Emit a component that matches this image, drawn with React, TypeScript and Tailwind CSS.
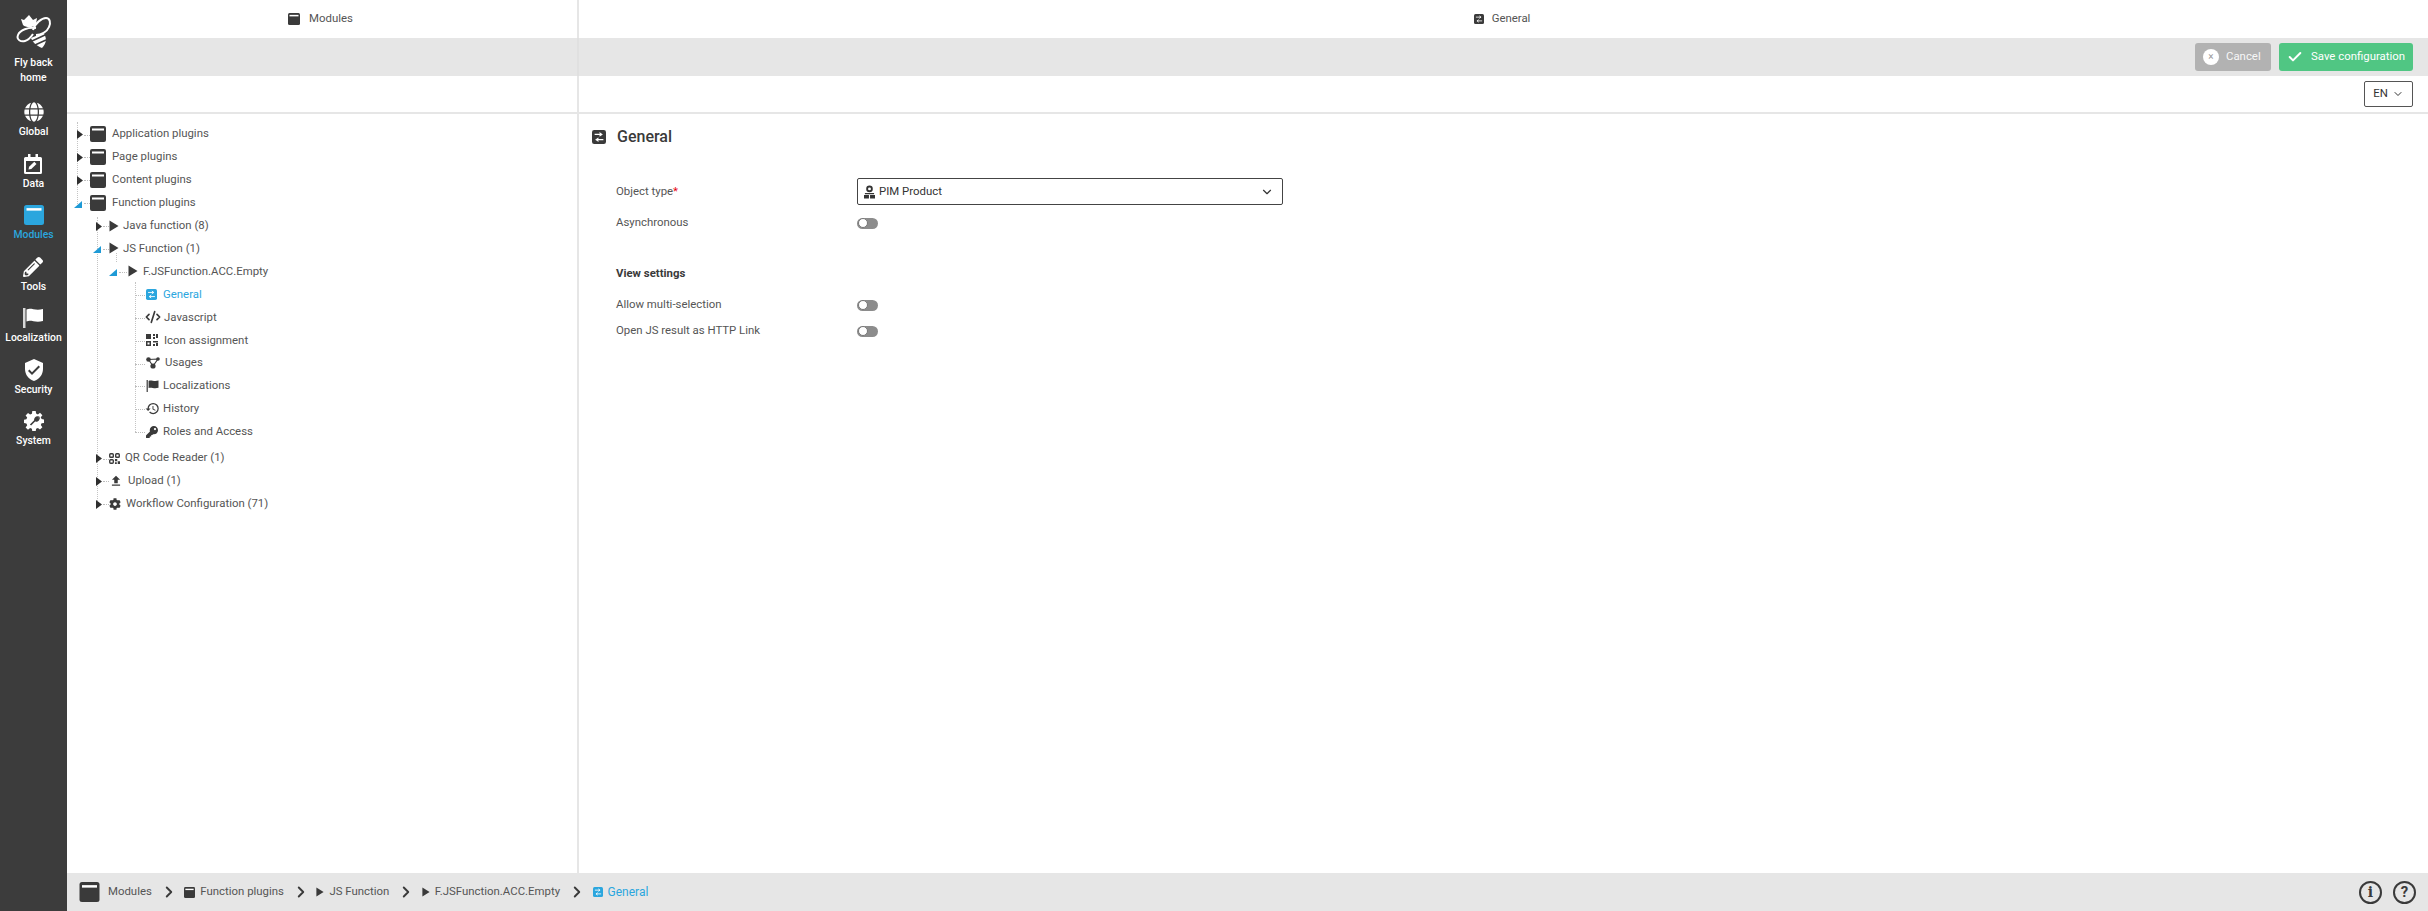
import { ReactNode } from "react";
import { FaGlobe, FaPencilAlt, FaCog, FaKey } from "react-icons/fa";
import { MdFileUpload, MdHistory, MdVerifiedUser } from "react-icons/md";
import { ChevronDown, ChevronRight, Check, CodeXml } from "lucide-react";

function ModuleIcon({ className }: { className: string }) {
  return (
    <svg viewBox="0 0 16 16" className={className}>
      <rect x="0" y="0" width="16" height="16" rx="2" fill="currentColor" />
      <rect x="2" y="2.500" width="12" height="2" fill="#fff" />
    </svg>
  );
}

function SlidersIcon({ className }: { className: string }) {
  return (
    <svg viewBox="0 0 16 16" className={className}>
      <rect x="0" y="0" width="16" height="16" rx="2.500" fill="currentColor" />
      <path d="M3 5h8M8.500 3l2.800 2-2.800 2M13 11H5M7.500 9l-2.800 2 2.800 2" stroke="#fff" strokeWidth="1.300" fill="none" />
    </svg>
  );
}

function PlayIcon({ className }: { className: string }) {
  return (
    <svg viewBox="0 0 10 12" className={className}>
      <path d="M0.500 0.500 L9.500 6 L0.500 11.500 Z" fill="currentColor" />
    </svg>
  );
}

function QrIcon({ className }: { className: string }) {
  return (
    <svg viewBox="0 0 12 12" className={className}>
      <g fill="none" stroke="currentColor" strokeWidth="1.500">
        <rect x="0.800" y="0.800" width="3.900" height="3.900" rx="1" />
        <rect x="7.300" y="0.800" width="3.900" height="3.900" rx="1" />
        <rect x="0.800" y="7.300" width="3.900" height="3.900" rx="1" />
      </g>
      <path fill="currentColor" d="M6.500 6.500h2.500V9H6.500zM9.500 9h2.500v3H9.500zM6.500 10h2v2h-2z" />
    </svg>
  );
}

function AssignIcon({ className }: { className: string }) {
  return (
    <svg viewBox="0 0 12 12" className={className}>
      <path fill="currentColor" fillRule="evenodd" d="M0 0h5v5H0zM7 0h2v2H7zM10 0h2v4h-2zM7 3h2v2H7zM0 7h5v5H0zM1.500 8.500v2h2v-2zM7 7h5v1.500H7zM10 9h2v3h-2zM7 10h2v2H7z" />
    </svg>
  );
}

function UsagesIcon({ className }: { className: string }) {
  return (
    <svg viewBox="0 0 14 12" className={className}>
      <path d="M2.500 2.500 7 9M12 2 7 9M2.500 2.500 12 2" stroke="currentColor" strokeWidth="1.200" fill="none" />
      <circle cx="2.500" cy="2.500" r="2.300" fill="currentColor" />
      <circle cx="12" cy="2" r="1.800" fill="currentColor" />
      <circle cx="7" cy="9" r="2.600" fill="currentColor" />
    </svg>
  );
}

function PersonIcon({ className }: { className: string }) {
  return (
    <svg viewBox="0 0 12 14" className={className}>
      <path fill="currentColor" fillRule="evenodd" d="M6 0a3.600 3.600 0 1 1 0 7.200A3.600 3.600 0 0 1 6 0zM6 2a1.600 1.600 0 1 0 0 3.200A1.600 1.600 0 0 0 6 2z" />
      <path fill="currentColor" d="M1 8h10v1.400H1zM0 10.200h5.400V14H0zM6.600 10.200H12V14H6.600z" />
    </svg>
  );
}

function FlagIcon({ className }: { className: string }) {
  return (
    <svg viewBox="0 0 20 20" className={className}>
      <rect x="0" y="0" width="2.500" height="20" fill="currentColor" opacity="0.800" />
      <path fill="currentColor" d="M3.500 1.500C8 -0.500 12 3 20 1V13C12 15 8 11.500 3.500 13.500Z" />
    </svg>
  );
}

function BeeLogo() {
  return (
    <svg viewBox="0 0 36 34" className="w-[36px] h-[34px] text-white">
      <g stroke="currentColor" fill="none" strokeWidth="2">
        <path d="M17 15C19 8 26 3 30 3C34 3 35 8 33 12C31 17 25 20 20 20" />
        <path d="M20 13C12 12 4 15 2 20C0 25 5 27 9 26C13 25 15 22 17 19" />
      </g>
      <path d="M5 4L8 5L13 0L17 5L21 3L20 9C18 13 10 13 7 10Z" fill="currentColor" />
      <path d="M15 23L27 18C31 22 31 28 26 33C21 31 17 28 15 23Z" fill="currentColor" />
      <path d="M16 26L29 20M19 30L30 25" stroke="#3c3c3c" strokeWidth="1.500" />
    </svg>
  );
}

function CalendarIcon() {
  return (
    <svg viewBox="0 0 18 20" className="w-[18px] h-[20px] text-white">
      <path fill="currentColor" fillRule="evenodd" d="M1.500 3H4V0h2.500v3h5V0H14v3h2.500A1.500 1.500 0 0 1 18 4.500v14a1.500 1.500 0 0 1-1.500 1.500h-15A1.500 1.500 0 0 1 0 18.500v-14A1.500 1.500 0 0 1 1.500 3zM2 7v11h14V7z" />
      <path fill="currentColor" d="M4.500 15.500l.6-2.800 5.200-5 2.200 2.200-5.200 5z" />
    </svg>
  );
}

function SystemIcon() {
  return (
    <svg viewBox="0 0 20 20" className="w-[20px] h-[20px] text-white">
      <path fill="currentColor" d="M8.300 0h3.400l.4 2.600 1.800.8 2.100-1.600 2.400 2.400-1.600 2.100.8 1.800 2.600.4v3.400l-2.600.4-.8 1.800 1.600 2.100-2.400 2.400-2.100-1.600-1.800.8-.4 2.600H8.300l-.4-2.600-1.800-.8L4 18.800l-2.400-2.400 1.600-2.100-.8-1.800L0 12.100V8.700l2.400-.4.8-1.800-1.600-2.100L4 2l2.100 1.600 1.800-.8z" />
      <path d="M6.500 14 11 9.500M11 9.500a2.600 2.600 0 0 1 3-3.300l-1.500 1.500.8 1.200 1.500-1a2.600 2.600 0 0 1-3.800 1.600z" stroke="#3c3c3c" strokeWidth="1.700" fill="#3c3c3c" />
    </svg>
  );
}

function NavItem({ icon, label, active, className }: { icon: ReactNode; label: string; active?: boolean; className: string }) {
  return (
    <div className={`flex flex-col items-center ${active ? "text-[#2ba6de]" : "text-white"} ${className}`}>
      <div className="h-[24px] flex items-center justify-center">{icon}</div>
      <div className="text-[10.400px] leading-[14px] font-medium mt-[1px]">{label}</div>
    </div>
  );
}

function Sidebar() {
  return (
    <aside className="w-[67px] shrink-0 bg-[#3c3c3c] flex flex-col items-center pt-[15px]">
      <BeeLogo />
      <div className="text-white text-[10.400px] leading-[14.500px] text-center mt-[7px] font-medium">
        Fly back
        <br />
        home
      </div>
      <NavItem className="mt-[15px] h-[51.500px]" label="Global" icon={<FaGlobe className="w-[20px] h-[20px]" />} />
      <NavItem className="h-[51.500px]" label="Data" icon={<CalendarIcon />} />
      <NavItem className="h-[51.500px]" label="Modules" active icon={<ModuleIcon className="w-[20px] h-[20px]" />} />
      <NavItem className="h-[51.500px]" label="Tools" icon={<FaPencilAlt className="w-[20px] h-[20px]" />} />
      <NavItem className="h-[51.500px]" label="Localization" icon={<FlagIcon className="w-[20px] h-[20px]" />} />
      <NavItem className="h-[51.500px]" label="Security" icon={<MdVerifiedUser className="w-[24px] h-[24px]" />} />
      <NavItem className="h-[51.500px]" label="System" icon={<SystemIcon />} />
    </aside>
  );
}

function Toggle({ open }: { open?: boolean }) {
  if (open) {
    return (
      <svg viewBox="0 0 8 7" className="w-[8px] h-[7px] ml-[-3px] mt-[3px] text-[#1e9ad6]">
        <path d="M8 0V7H0Z" fill="currentColor" />
      </svg>
    );
  }
  return (
    <svg viewBox="0 0 6 9" className="w-[6px] h-[9px] mt-[1px] text-[#2f2f2f]">
      <path d="M0 0L6 4.500L0 9Z" fill="currentColor" />
    </svg>
  );
}

function Row({ pad, toggle, open, icon, label, active, slot, gap, dots }: {
  pad: string; toggle?: boolean; open?: boolean; icon: ReactNode; label: string; active?: boolean; slot: string; gap: string; dots?: string;
}) {
  return (
    <div className={`relative h-[22.900px] flex items-center ${pad} ${active ? "text-[#2ba6de]" : "text-[#555]"}`}>
      {dots && <span className={`absolute top-[12px] border-t border-dotted border-[#bdbdbd] ${dots}`} />}
      <div className={`${slot} shrink-0 flex items-center`}>{toggle && <Toggle open={open} />}</div>
      <div className={`shrink-0 flex items-center ${gap} ${active ? "text-[#2ba6de]" : "text-[#3a3a3a]"}`}>{icon}</div>
      <span className="whitespace-nowrap">{label}</span>
    </div>
  );
}

function Tree() {
  const top = { pad: "pl-[10px]", toggle: true, slot: "w-[13px]", gap: "mr-[6px]", dots: "left-[17px] w-[6px]" };
  const mid = { pad: "pl-[29px]", toggle: true, slot: "w-[13px]", gap: "mr-[4px]", dots: "left-[36px] w-[6px]" };
  const leaf = { pad: "pl-[79px]", slot: "w-0", dots: "left-[68px] w-[10px]" };
  const playSm = <PlayIcon className="w-[10px] h-[12px]" />;
  return (
    <div className="relative pt-[8.600px] text-[11.400px]">
      <div className="absolute left-[10px] top-[8px] h-[84px] border-l border-dotted border-[#c4c4c4]" />
      <div className="absolute left-[30px] top-[103px] h-[286px] border-l border-dotted border-[#c4c4c4]" />
      <div className="absolute left-[49px] top-[139px] h-[9px] border-l border-dotted border-[#c4c4c4]" />
      <div className="absolute left-[68px] top-[168px] h-[150px] border-l border-dotted border-[#c4c4c4]" />
      <Row {...top} icon={<ModuleIcon className="w-[16px] h-[16px]" />} label="Application plugins" />
      <Row {...top} icon={<ModuleIcon className="w-[16px] h-[16px]" />} label="Page plugins" />
      <Row {...top} icon={<ModuleIcon className="w-[16px] h-[16px]" />} label="Content plugins" />
      <Row {...top} open icon={<ModuleIcon className="w-[16px] h-[16px]" />} label="Function plugins" />
      <Row {...mid} icon={playSm} label="Java function (8)" />
      <Row {...mid} open icon={playSm} label="JS Function (1)" />
      <Row pad="pl-[45px]" toggle open slot="w-[16px]" gap="mr-[5px]" dots="left-[52px] w-[8px]" icon={playSm} label="F.JSFunction.ACC.Empty" />
      <Row {...leaf} active gap="mr-[6px]" icon={<SlidersIcon className="w-[11px] h-[11px]" />} label="General" />
      <Row {...leaf} gap="mr-[3px]" icon={<CodeXml className="w-[16px] h-[16px] ml-[-1px]" strokeWidth={2.500} />} label="Javascript" />
      <Row {...leaf} gap="mr-[6px]" icon={<AssignIcon className="w-[12px] h-[12px]" />} label="Icon assignment" />
      <Row {...leaf} gap="mr-[5px]" icon={<UsagesIcon className="w-[14px] h-[12px]" />} label="Usages" />
      <Row {...leaf} gap="mr-[4px]" icon={<FlagIcon className="w-[13px] h-[12px]" />} label="Localizations" />
      <Row {...leaf} gap="mr-[3px]" icon={<MdHistory className="w-[15px] h-[15px] ml-[-1px]" />} label="History" />
      <Row {...leaf} gap="mr-[5px]" icon={<FaKey className="w-[12px] h-[12px]" />} label="Roles and Access" />
      <div className="h-[3.500px]" />
      <Row {...mid} gap="mr-[5px]" icon={<QrIcon className="w-[11px] h-[11px]" />} label="QR Code Reader (1)" />
      <Row {...mid} gap="mr-[5px]" icon={<MdFileUpload className="w-[14px] h-[14px]" />} label="Upload (1)" />
      <Row {...mid} gap="mr-[5px]" icon={<FaCog className="w-[12px] h-[12px]" />} label="Workflow Configuration (71)" />
    </div>
  );
}

function Switch() {
  return (
    <div className="w-[21px] h-[11px] rounded-full bg-[#8c8c8c] flex items-center">
      <div className="w-[10px] h-[10px] rounded-full bg-white border border-[#777] ml-[0.500px]" />
    </div>
  );
}

function Crumb({ icon, label, active }: { icon: ReactNode; label: string; active?: boolean }) {
  return (
    <div className="flex items-center">
      {icon}
      <span className={`ml-[5px] whitespace-nowrap ${active ? "text-[#2ba6de] text-[12px]" : ""}`}>{label}</span>
      {!active && <ChevronRight className="w-[18px] h-[18px] ml-[8px] mr-[6.500px] text-[#3a3a3a]" strokeWidth={2.500} />}
    </div>
  );
}

export default function App() {
  return (
    <div className="h-[911px] flex bg-white overflow-hidden text-[11.400px] text-[#555] font-['Roboto',sans-serif]">
      <Sidebar />
      <div className="flex-1 min-w-0 flex flex-col">
        <div className="h-[38px] flex shrink-0">
          <div className="w-[512px] border-r-2 border-[#e6e6e6] flex items-center justify-center gap-[9px] pr-[3px]">
            <ModuleIcon className="w-[12px] h-[12px] text-[#3a3a3a]" />
            <span>Modules</span>
          </div>
          <div className="flex-1 flex items-center justify-center gap-[8px] pr-[3px]">
            <SlidersIcon className="w-[10px] h-[10px] text-[#3a3a3a]" />
            <span>General</span>
          </div>
        </div>
        <div className="h-[38px] flex shrink-0 bg-[#e6e6e6]">
          <div className="w-[512px] border-r-2 border-[#e0e0e0]" />
          <div className="flex-1 flex items-center justify-end gap-[8px] pr-[15px]">
            <button className="h-[28px] w-[76px] rounded-[3px] bg-[#b2b2b2] text-white flex items-center pl-[8px] gap-[7px]">
              <span className="w-[16px] h-[16px] rounded-full bg-white text-[#999] text-[10px] leading-[16px] text-center">×</span>
              <span className="opacity-90">Cancel</span>
            </button>
            <button className="h-[28px] w-[134px] rounded-[3px] bg-[#50c683] text-white flex items-center pl-[8px] gap-[8px]">
              <Check className="w-[16px] h-[16px]" strokeWidth={3} />
              <span>Save configuration</span>
            </button>
          </div>
        </div>
        <div className="h-[38px] flex shrink-0 border-b-2 border-[#e6e6e6]">
          <div className="w-[512px] border-r-2 border-[#e6e6e6]" />
          <div className="flex-1 flex items-center justify-end pr-[15px]">
            <div className="w-[49px] h-[26px] rounded-[2px] border border-[#555] flex items-center justify-center gap-[4px] text-[#333]">
              EN
              <ChevronDown className="w-[12px] h-[12px]" />
            </div>
          </div>
        </div>
        <div className="flex-1 min-h-0 flex">
          <div className="w-[512px] border-r-2 border-[#e6e6e6]">
            <Tree />
          </div>
          <div className="flex-1 pl-[13px] pt-[13px]">
            <div className="flex items-center gap-[11px] h-[20px] text-[#3a3a3a]">
              <SlidersIcon className="w-[14px] h-[14px]" />
              <span className="text-[16px] font-medium">General</span>
            </div>
            <div className="pl-[24px] mt-[31px] w-[691px]">
              <div className="flex items-center h-[27px]">
                <div className="w-[241px]">
                  Object type<span className="text-red-600">*</span>
                </div>
                <div className="flex-1 h-[27px] rounded-[2px] border border-[#444] flex items-center pl-[6px] pr-[8px] text-[#333]">
                  <PersonIcon className="w-[11px] h-[14px] text-[#333]" />
                  <span className="ml-[4px]">PIM Product</span>
                  <ChevronDown className="w-[14px] h-[14px] ml-auto" />
                </div>
              </div>
              <div className="flex items-center h-[22px] mt-[7px]">
                <div className="w-[241px]">Asynchronous</div>
                <Switch />
              </div>
              <div className="font-bold text-[#3a3a3a] mt-[31px] leading-[16px]">View settings</div>
              <div className="flex items-center h-[22px] mt-[13px]">
                <div className="w-[241px]">Allow multi-selection</div>
                <Switch />
              </div>
              <div className="flex items-center h-[22px] mt-[4px]">
                <div className="w-[241px]">Open JS result as HTTP Link</div>
                <Switch />
              </div>
            </div>
          </div>
        </div>
        <div className="h-[38px] shrink-0 bg-[#e6e6e6] flex items-center pl-[11px] pr-[12px]">
          <ModuleIcon className="w-[23px] h-[20px] text-[#3a3a3a]" />
          <span className="ml-[7px]">Modules</span>
          <ChevronRight className="w-[18px] h-[18px] ml-[8px] mr-[6.500px] text-[#3a3a3a]" strokeWidth={2.500} />
          <Crumb icon={<ModuleIcon className="w-[11px] h-[11px] text-[#3a3a3a]" />} label="Function plugins" />
          <Crumb icon={<PlayIcon className="w-[8px] h-[10px] text-[#3a3a3a]" />} label="JS Function" />
          <Crumb icon={<PlayIcon className="w-[8px] h-[10px] text-[#3a3a3a]" />} label="F.JSFunction.ACC.Empty" />
          <Crumb active icon={<SlidersIcon className="w-[10px] h-[10px] text-[#2ba6de]" />} label="General" />
          <div className="ml-auto flex items-center gap-[11px] text-[#3a3a3a]">
            <span className="w-[23px] h-[23px] rounded-full border-2 border-[#3a3a3a] flex items-center justify-center font-bold font-['DejaVu_Serif',serif] text-[14px]">i</span>
            <span className="w-[23px] h-[23px] rounded-full border-2 border-[#3a3a3a] flex items-center justify-center font-bold text-[15px]">?</span>
          </div>
        </div>
      </div>
    </div>
  );
}
